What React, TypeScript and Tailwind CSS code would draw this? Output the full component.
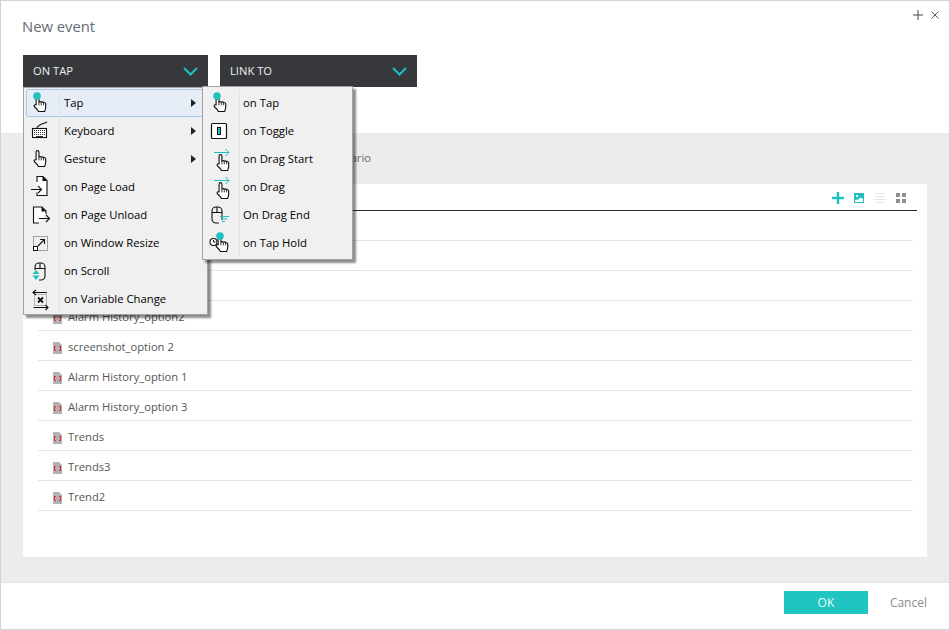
import React from "react";

const TEAL = "#1fc1c0";

const HAND =
  "M3.3 10.500V2.200a1.500 1.500 0 0 1 3 0V7.500c1-.6 2-.4 2.500.2 1-.5 2-.3 2.500.4 1.200-.3 2.200.4 2.200 1.600V13c0 1.500-.7 2.500-1 4.500H5.800c-.6-1.500-2-2.900-4-4.700-1.300-1.200-.5-2.900 1.500-2.300z";

const Hand = ({ x, y }: { x: number; y: number }) => (
  <g transform={`translate(${x} ${y}) scale(0.94)`}>
    <path d={HAND} fill="#fff" stroke="#111" strokeWidth="1.200" strokeLinejoin="round" />
    <path d="M6.300 7.500V11M8.800 7.800V11M11.300 8.200V11" stroke="#111" strokeWidth="0.900" />
  </g>
);

const Icon = ({ children }: { children: React.ReactNode }) => (
  <svg width="36" height="28" viewBox="0 0 36 28" fill="none" className="shrink-0">
    {children}
  </svg>
);

const line = { stroke: "#111", strokeWidth: 1.1 };

const TapIcon = () => (
  <Icon>
    <Hand x={9} y={6} />
    <circle cx="13" cy="7" r="3.800" fill={TEAL} />
  </Icon>
);

const KeyboardIcon = () => (
  <Icon>
    <path d="M23 5c-4 2-9 2-10 6" {...line} />
    <rect x="8.500" y="11.500" width="14" height="9" fill="#fff" {...line} />
    <path d="M10 13.500h11M10 15.500h11M10 17.500h11" stroke="#333" strokeWidth="1" strokeDasharray="1 1" />
    <path d="M12 19.500h7" stroke="#333" />
  </Icon>
);

const GestureIcon = () => (
  <Icon>
    <Hand x={9} y={5} />
  </Icon>
);

const PageLoadIcon = () => (
  <Icon>
    <path d="M13 9V3.500h6l4 4v15H13v-3" fill="#fff" {...line} />
    <path d="M18.500 3.500l4.500 4.500h-4.500z" fill="#111" />
    <path d="M7 16.500h10.500M14 13l3.500 3.500-3.500 3.500" {...line} />
  </Icon>
);

const PageUnloadIcon = () => (
  <Icon>
    <path d="M22 13V10l-4-4H9.500v16H15" fill="#fff" {...line} />
    <path d="M17.500 6l4.500 4.500h-4.500z" fill="#111" />
    <path d="M15 17.500h10.500M22 14l3.500 3.500-3.500 3.500" {...line} />
  </Icon>
);

const ResizeIcon = () => (
  <Icon>
    <rect x="9.500" y="7.500" width="14" height="14" stroke="#555" strokeDasharray="1 1" />
    <rect x="9.500" y="17.500" width="4" height="4" fill="#fff" stroke="#111" />
    <path d="M14 17l6-6M16 10.500h4.500V15" {...line} />
  </Icon>
);

const ScrollIcon = () => (
  <Icon>
    <path d="M11 13V10a4 4 0 0 1 4-4h2a4 4 0 0 1 4 4v9a4 4 0 0 1-4 4h-2" {...line} />
    <path d="M11 11.500h10M16 6v5.500" {...line} />
    <path d="M12 13l3.500 4h-7zM12 23l-3.500-4.500h7z" fill={TEAL} />
  </Icon>
);

const VariableIcon = () => (
  <Icon>
    <rect x="10.500" y="9.500" width="12" height="11" stroke="#777" strokeDasharray="1 1" />
    <path d="M9 7.500h14M12 5L9 7.500l3 2.500M9.500 22.500h14.500M21.500 20l2.500 2.500-2.500 2.500" {...line} />
    <path d="M14 12.500l5 5M19 12.500l-5 5" stroke="#111" strokeWidth="1.800" />
  </Icon>
);

const ToggleIcon = () => (
  <Icon>
    <rect x="7.500" y="6.500" width="15" height="15" rx="1" fill="#fff" stroke="#111" strokeWidth="1.200" />
    <rect x="13.500" y="10.500" width="3" height="7" fill={TEAL} stroke="#111" />
  </Icon>
);

const DragIcon = () => (
  <Icon>
    <path d="M10 7.500h15M21.500 4l3.500 3.500-3.500 3.500" stroke={TEAL} />
    <Hand x={12} y={9} />
  </Icon>
);

const DragEndIcon = () => (
  <Icon>
    <path d="M18 19V10a4 4 0 0 0-4-4h-2a4 4 0 0 0-4 4v8a4 4 0 0 0 4 4h3" {...line} />
    <path d="M8 11.500h10M13 6v5.500" {...line} />
    <path d="M16 15.500h9M17 18h6M18 20.500h3" stroke={TEAL} />
  </Icon>
);

const TapHoldIcon = () => (
  <Icon>
    <circle cx="9.500" cy="13" r="3.500" fill="#fff" {...line} />
    <path d="M9.500 11v2h2" stroke="#111" />
    <Hand x={11} y={6} />
    <circle cx="16" cy="7" r="3.800" fill={TEAL} />
  </Icon>
);

const Caret = () => (
  <svg width="5" height="8" viewBox="0 0 5 8" className="shrink-0">
    <path d="M0 0l5 4-5 4z" fill="#222" />
  </svg>
);

const Chevron = () => (
  <svg width="15" height="9" viewBox="0 0 15 9" fill="none">
    <path d="M1 1l6.500 6.500L14 1" stroke={TEAL} strokeWidth="2" />
  </svg>
);

const FileIcon = () => (
  <svg width="9" height="12" viewBox="0 0 9 12" className="shrink-0">
    <path d="M0 0h6l3 3v9H0z" fill="#b0b3b2" />
    <path d="M3 4.500H1.500v4H3M6 4.500h1.500v4H6" fill="none" stroke="#e8262b" />
  </svg>
);

const firstMenu = [
  { label: "Tap", icon: <TapIcon />, more: true, active: true },
  { label: "Keyboard", icon: <KeyboardIcon />, more: true },
  { label: "Gesture", icon: <GestureIcon />, more: true },
  { label: "on Page Load", icon: <PageLoadIcon /> },
  { label: "on Page Unload", icon: <PageUnloadIcon /> },
  { label: "on Window Resize", icon: <ResizeIcon /> },
  { label: "on Scroll", icon: <ScrollIcon /> },
  { label: "on Variable Change", icon: <VariableIcon /> },
];

const subMenu = [
  { label: "on Tap", icon: <TapIcon /> },
  { label: "on Toggle", icon: <ToggleIcon /> },
  { label: "on Drag Start", icon: <DragIcon /> },
  { label: "on Drag", icon: <DragIcon /> },
  { label: "On Drag End", icon: <DragEndIcon /> },
  { label: "on Tap Hold", icon: <TapHoldIcon /> },
];

const rows = [
  "",
  "",
  "",
  "Alarm History_option2",
  "screenshot_option 2",
  "Alarm History_option 1",
  "Alarm History_option 3",
  "Trends",
  "Trends3",
  "Trend2",
];

const App = () => {
  return (
    <div className="flex h-[630px] w-[950px] flex-col overflow-hidden border border-[#ccd5d3] bg-white font-['Open_Sans',sans-serif] text-[11.2px] text-[#555]">
      <header className="relative h-[132px] shrink-0 px-[21px] pt-[14px]">
        <h1 className="text-[14.8px] leading-[22px] text-[#666c70]">New event</h1>
        <div className="absolute right-[10px] top-[9px] flex items-center gap-[8px]">
          <svg width="10" height="10" viewBox="0 0 10 10">
            <path d="M5 0v10M0 5h10" stroke="#444" />
          </svg>
          <svg width="8" height="8" viewBox="0 0 8 8">
            <path d="M.5.500l7 7M7.500.500l-7 7" stroke="#555" />
          </svg>
        </div>
        <div className="ml-px mt-[18px] flex gap-3">
          <div className="relative">
            <div className="flex h-8 w-[185px] items-center justify-between bg-[#36383c] pl-2.5 pr-[10px] pt-px text-[#eef0f0]">
              <span>ON TAP</span>
              <Chevron />
            </div>
            <div className="absolute left-0 top-8 z-20 w-[185px] border border-[#a3a3a3] bg-[#f0f0f0] py-px pl-0.5 text-[11.3px] shadow-[3px_3px_2px_rgba(0,0,0,0.45)]">
              {firstMenu.map((item) => (
                <div
                  key={item.label}
                  className={
                    item.active
                      ? "flex h-7 items-center rounded-[2px] border border-[#a9c8ee] bg-[#e6edf6] pr-[10px] text-black"
                      : "flex h-7 items-center border border-transparent pr-[10px] text-black"
                  }
                >
                  <span className="flex w-[33px] shrink-0 border-r border-[#e2e3e3]">
                    <span className="-ml-[3px] flex">{item.icon}</span>
                  </span>
                  <span className="ml-1 flex-1 pt-px">{item.label}</span>
                  {item.more && <Caret />}
                </div>
              ))}
              <div className="absolute left-[178px] top-[-2px] z-30 w-[151px] border border-[#a3a3a3] bg-[#f0f0f0] py-0.5 pl-px shadow-[3px_3px_2px_rgba(0,0,0,0.45)]">
                {subMenu.map((item) => (
                  <div key={item.label} className="flex h-7 items-center text-black">
                    <span className="flex w-[36px] shrink-0 border-r border-[#e2e3e3]">{item.icon}</span>
                    <span className="ml-[3px] pt-px">{item.label}</span>
                  </div>
                ))}
              </div>
            </div>
          </div>
          <div className="flex h-8 w-[197px] items-center justify-between bg-[#36383c] pl-2.5 pr-[10px] pt-px text-[#eef0f0]">
            <span>LINK TO</span>
            <Chevron />
          </div>
        </div>
      </header>

      <main className="flex h-[449px] shrink-0 flex-col bg-[#ececec] px-[22px] pb-[25px]">
        <div className="flex h-[51px] shrink-0 items-center pl-[303px] text-[#666]">Scenario</div>
        <section className="relative flex-1 bg-white px-[15px] pt-[26px]">
          <div className="absolute right-[21px] top-2 flex items-center gap-[10px]">
            <svg width="12" height="12" viewBox="0 0 12 12">
              <path d="M6 0v12M0 6h12" stroke={TEAL} strokeWidth="2.400" />
            </svg>
            <svg width="10" height="10" viewBox="0 0 10 10">
              <path d="M0 0h10v10H0z" fill={TEAL} />
              <path d="M1 9V7.500l1-1 1 .5 2-1 1-1.500 1 .5 2 1V9z" fill="#fff" />
              <rect x="2" y="2" width="2" height="2" fill="#fff" />
            </svg>
            <svg width="12" height="10" viewBox="0 0 12 10" className="-mr-px">
              <path d="M2 .500h9M2 3.500h9M2 6.500h9M2 9.500h9" stroke="#e3e4e4" />
              <path d="M0 .500h1M0 3.500h1M0 6.500h1M0 9.500h1" stroke="#e3e4e4" />
            </svg>
            <svg width="10" height="10" viewBox="0 0 10 10" className="ml-px">
              <path d="M0 0h4v4H0zM6 0h4v4H6zM0 6h4v4H0zM6 6h4v4H6z" fill="#8e9093" />
            </svg>
          </div>
          <div className="mr-[-5px] border-t border-[#2a2a2a]" />
          <ul>
            {rows.map((name, i) => (
              <li key={i} className="mr-[-1px] flex h-[30px] items-center gap-[6px] border-b border-[#e4e4e4] pl-[15px] pt-[4px]">
                {name && <FileIcon />}
                <span>{name}</span>
              </li>
            ))}
          </ul>
        </section>
      </main>

      <footer className="flex flex-1 items-start justify-end border-t border-[#e4e4e4] pr-[22px] pt-2">
        <button className="h-[23px] w-[84px] bg-[#20c4c0] text-center text-xs text-[#e9fbfa]">OK</button>
        <button className="ml-[22px] flex h-[23px] items-center text-xs text-[#8a8d90]">Cancel</button>
      </footer>
    </div>
  );
};

export default App;
